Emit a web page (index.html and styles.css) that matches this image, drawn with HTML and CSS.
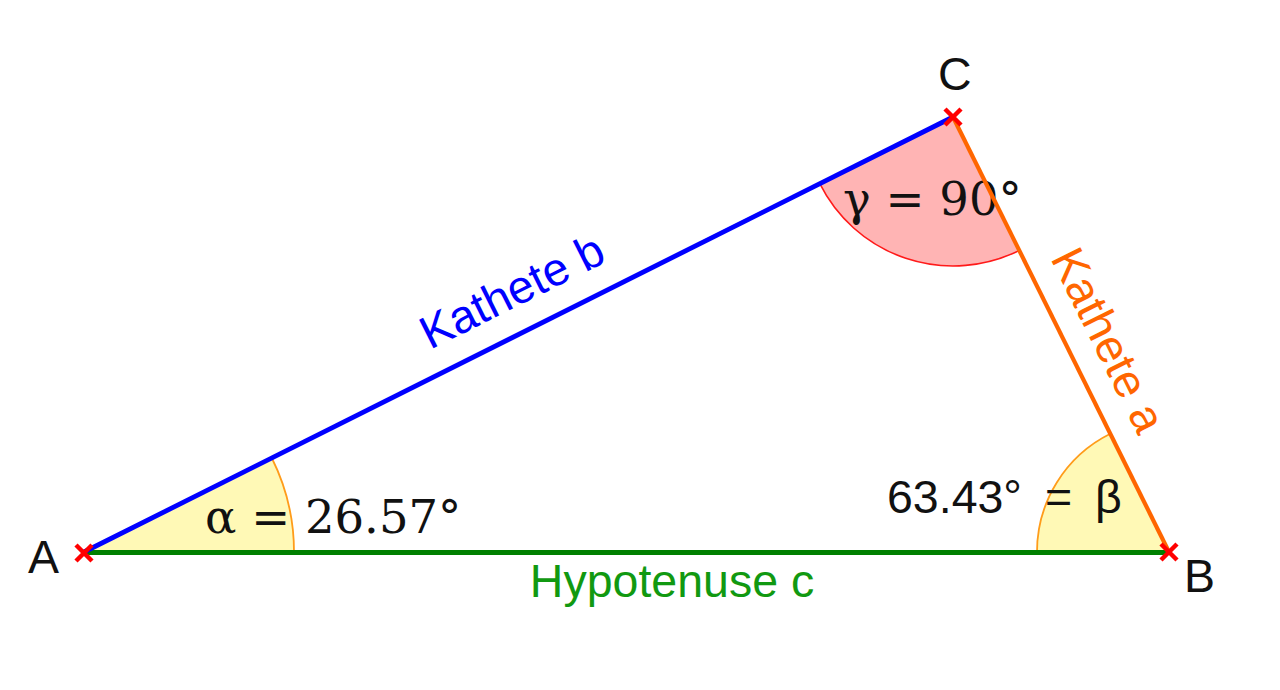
FILE: index.html
```html
<!DOCTYPE html>
<html lang="de">
<head>
<meta charset="utf-8">
<title>Rechtwinkliges Dreieck</title>
<link rel="stylesheet" href="styles.css">
</head>
<body>
<svg class="canvas" viewBox="0 0 1280 690" width="1280" height="690" xmlns="http://www.w3.org/2000/svg">
  <!-- angle sectors -->
  <path class="sector-yellow" d="M84,552 L294,552 A210,210 0 0 0 271.8,458 Z"/>
  <path class="sector-yellow" d="M1169,552 L1037,552 A132,132 0 0 1 1110.3,433.8 Z"/>
  <path class="sector-red" d="M953,117 L819.8,183.7 A149,149 0 0 0 1019.3,250.4 Z"/>
  <path class="arc-orange" d="M294,552 A210,210 0 0 0 271.8,458"/>
  <path class="arc-orange" d="M1037,552 A132,132 0 0 1 1110.3,433.8"/>
  <path class="arc-red" d="M819.8,183.7 A149,149 0 0 0 1019.3,250.4"/>

  <!-- angle labels -->
  <text class="serif" x="205" y="533">α = 26.57°</text>
  <text class="serif" x="843" y="215">γ = 90°</text>
  <text class="sans" y="513"><tspan x="887">63.43°</tspan><tspan x="1045">=</tspan><tspan x="1095">β</tspan></text>

  <!-- sides -->
  <line class="side-c" x1="84" y1="552.5" x2="1169" y2="552.5"/>
  <line class="side-a" x1="953" y1="117" x2="1169" y2="552"/>
  <line class="side-b" x1="84" y1="552" x2="953" y2="117"/>

  <!-- vertices -->
  <path class="cross" d="M76,545 L92,561 M92,545 L76,561"/>
  <path class="cross" d="M1161,544 L1177,560 M1177,544 L1161,560"/>
  <path class="cross" d="M945,109 L961,125 M961,109 L945,125"/>

  <!-- vertex labels -->
  <text class="sans" x="28" y="573">A</text>
  <text class="sans" x="1184" y="592">B</text>
  <text class="sans" x="938" y="90">C</text>

  <!-- side labels -->
  <text class="sans label-c" x="672" y="597" text-anchor="middle">Hypotenuse c</text>
  <text class="sans label-b" x="430" y="350" transform="rotate(-26.57 430 350)">Kathete b</text>
  <text class="sans label-a" x="1050" y="258" transform="rotate(63.6 1050 258)">Kathete a</text>
</svg>
</body>
</html>
```

FILE: styles.css
```css
html, body {
  margin: 0;
  padding: 0;
  background: #ffffff;
}

.canvas {
  display: block;
  width: 1280px;
  height: 690px;
}

.sector-yellow {
  fill: #fff9b6;
  stroke: none;
}

.sector-red {
  fill: #ffb4b4;
  stroke: none;
}

.arc-orange {
  fill: none;
  stroke: #ff9c1a;
  stroke-width: 1.8;
}

.arc-red {
  fill: none;
  stroke: #ff1a1a;
  stroke-width: 1.6;
}

.side-a {
  stroke: #ff6600;
  stroke-width: 4.2;
}

.side-b {
  stroke: #0000ff;
  stroke-width: 4.8;
}

.side-c {
  stroke: #008000;
  stroke-width: 5;
}

.cross {
  fill: none;
  stroke: #ff0000;
  stroke-width: 4.5;
}

.serif {
  font-family: "DejaVu Serif", serif;
  font-size: 46.5px;
  fill: #111111;
}

.sans {
  font-family: "Liberation Sans", Arial, sans-serif;
  font-size: 46.5px;
  fill: #111111;
}

.label-a {
  fill: #ff6600;
}

.label-b {
  fill: #0000ff;
}

.label-c {
  fill: #119911;
}
```
